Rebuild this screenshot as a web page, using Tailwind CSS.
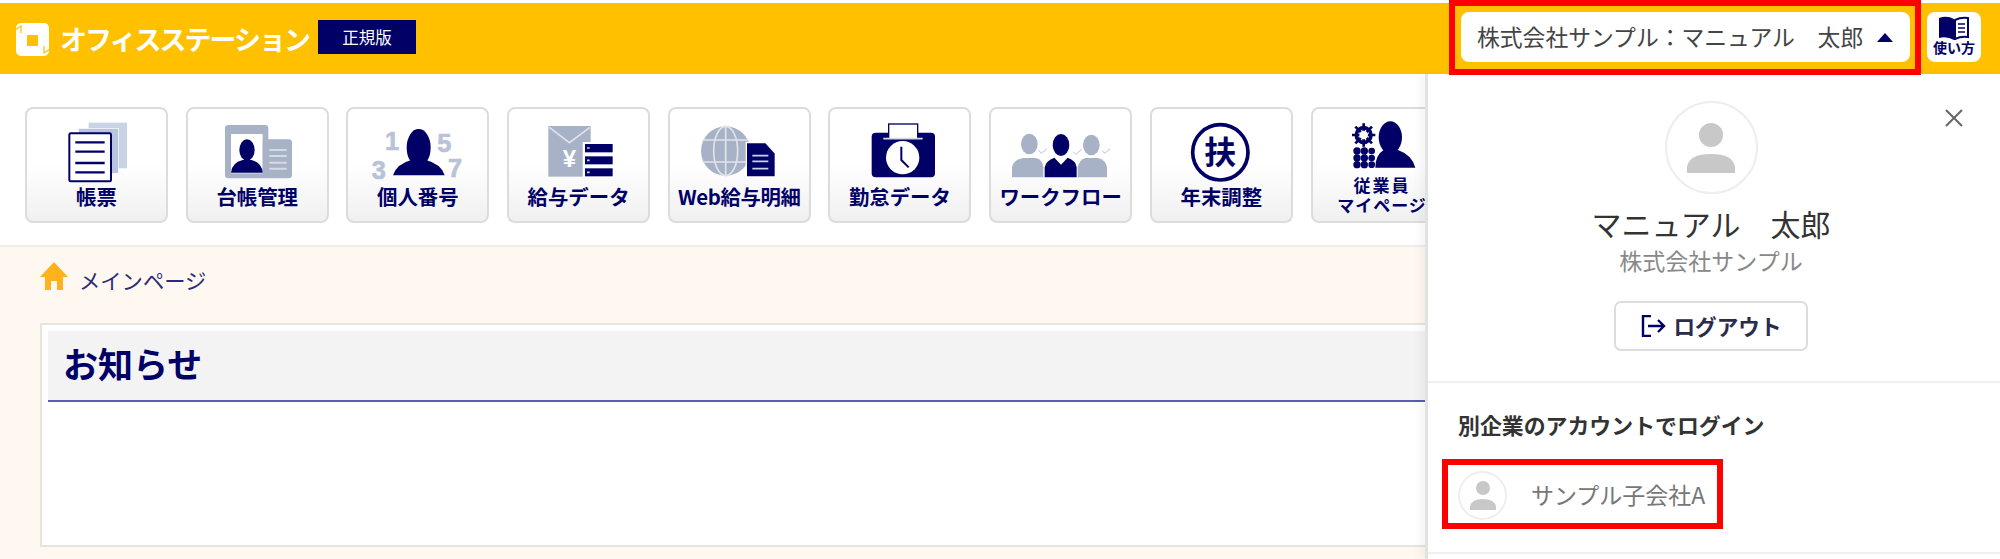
<!DOCTYPE html>
<html lang="ja">
<head>
<meta charset="utf-8">
<title>オフィスステーション</title>
<script src="https://cdn.jsdelivr.net/npm/@tailwindcss/browser@4"></script>
</head>
<body class="font-['Noto_Sans_CJK_JP','Noto_Sans',sans-serif] bg-white">
<div class="relative w-[2000px] h-[559px] overflow-hidden bg-[#fff8f0]">
  <div class="h-[3px] bg-white"></div>
  <header class="h-[71px] bg-[#ffc000] flex items-center pl-[16px] pr-[19px]">
    <svg class="w-[33px] h-[33px] mb-[-1px]" viewBox="0 0 33 33"><rect width="33" height="33" rx="5" fill="#fff"/><rect x="11" y="12" width="11" height="11" fill="#ffc000"/><path stroke="#ffc000" stroke-width="1.2" fill="none" d="M-1 7 5 3V10M34 26 28 30V23"/></svg>
    <span class="ml-[11px] w-[248px] text-white text-[27px] leading-none font-bold tracking-[-2px] whitespace-nowrap">オフィスステーション</span>
    <span class="ml-[10px] w-[98px] h-[34px] bg-[#000066] text-white text-[16.5px] flex items-center justify-center mb-[3px]">正規版</span>
    <div class="ml-auto flex items-center gap-[17px] mb-[3px]">
      <button class="w-[449px] h-[50px] bg-white rounded-[8px] flex items-center pl-[16px] text-[#444] text-[22.8px] leading-none whitespace-nowrap">
        <span>株式会社サンプル：マニュアル　太郎</span>
        <svg class="ml-[14px] w-[16px] h-[9px]" viewBox="0 0 16 9"><path fill="#000066" d="M8 0 16 9H0Z"/></svg>
      </button>
      <button class="w-[54px] h-[50px] bg-white rounded-[8px] flex flex-col items-center pt-[4px]">
        <svg class="w-[30px] h-[24px]" viewBox="0 0 30 24"><path fill="#000066" d="M0 2Q8 -1 15 3V24Q8 20 0 22Z"/><path fill="#fff" stroke="#000066" stroke-width="2" d="M16 4Q22 1 29 2V21Q22 20 16 23Z"/><path stroke="#000066" stroke-width="1.5" d="M19 8H26M19 12H26M19 16H26"/></svg>
        <span class="text-[14px] leading-[15px] font-bold text-[#000066]">使い方</span>
      </button>
    </div>
  </header>

  <nav class="h-[173px] bg-white border-b-2 border-[#ececec] pt-[33px] pl-[25px] flex gap-[17.7px] items-start">
    <a class="shrink-0 w-[143px] h-[116px] rounded-[8px] border-2 border-[#dcdcdc] bg-linear-to-b from-white from-50% to-[#f0f0f0] flex flex-col items-center pt-[11px] text-[#000066] text-[20.4px] leading-[21px] font-bold whitespace-nowrap">
      <svg class="w-[100px] h-[66px] shrink-0" viewBox="140 360 300 198"><rect x="265" y="368" width="115" height="137" fill="#c9d3e6"/><rect x="235" y="385" width="120" height="135" fill="#b9c5dc" stroke="#fff" stroke-width="2"/><rect x="207" y="400" width="125" height="144" rx="4" fill="#fff" stroke="#000066" stroke-width="6"/><path stroke="#000066" stroke-width="7" d="M225 427H313M225 455H313M225 489H313M225 517H313"/></svg>
      <span>帳票</span>
    </a>
    <a class="shrink-0 w-[143px] h-[116px] rounded-[8px] border-2 border-[#dcdcdc] bg-linear-to-b from-white from-50% to-[#f0f0f0] flex flex-col items-center pt-[11px] text-[#000066] text-[20.4px] leading-[21px] font-bold whitespace-nowrap">
      <svg class="w-[100px] h-[66px] shrink-0" viewBox="623 360 300 198"><rect x="677" y="375" width="130" height="160" rx="10" fill="#a8b2c6"/><rect x="695" y="402" width="95" height="118" fill="#fff"/><rect x="790" y="418" width="88" height="117" rx="10" fill="#a8b2c6"/><path stroke="#d5dae4" stroke-width="6" d="M810 450H862M810 468H862M810 488H862M810 506H862"/><ellipse cx="743" cy="450" rx="23" ry="32" fill="#000066"/><path fill="#000066" d="M695 518Q697 488 730 480H756Q788 488 790 518Z"/></svg>
      <span>台帳管理</span>
    </a>
    <a class="shrink-0 w-[143px] h-[116px] rounded-[8px] border-2 border-[#dcdcdc] bg-linear-to-b from-white from-50% to-[#f0f0f0] flex flex-col items-center pt-[11px] text-[#000066] text-[20.4px] leading-[21px] font-bold whitespace-nowrap">
      <svg class="w-[100px] h-[66px] shrink-0" viewBox="1105 360 300 198"><g fill="#b8c3d8" stroke="#b8c3d8" stroke-width="2" font-size="76" font-weight="700" font-family="Liberation Sans, sans-serif"><text x="1156" y="451">1</text><text x="1313" y="455">5</text><text x="1116" y="536">3</text><text x="1345" y="530">7</text></g><ellipse cx="1257" cy="443" rx="36" ry="56" fill="#000066"/><path fill="#000066" d="M1180 526Q1190 492 1235 480H1279Q1325 492 1335 526Z"/></svg>
      <span>個人番号</span>
    </a>
    <a class="shrink-0 w-[143px] h-[116px] rounded-[8px] border-2 border-[#dcdcdc] bg-linear-to-b from-white from-50% to-[#f0f0f0] flex flex-col items-center pt-[11px] text-[#000066] text-[20.4px] leading-[21px] font-bold whitespace-nowrap">
      <svg class="w-[100px] h-[66px] shrink-0" viewBox="117 90 300 198"><rect x="175" y="108" width="127" height="152" fill="#a8b2c6"/><path fill="none" stroke="#dfe3ea" stroke-width="5" d="M178 112 238 158 300 112"/><text x="238" y="232" text-anchor="middle" fill="#fff" font-size="72" font-weight="700" font-family="Liberation Sans, sans-serif">¥</text><rect x="278" y="156" width="96" height="108" fill="#fff"/><rect x="285" y="162" width="83" height="25" fill="#000066"/><rect x="285" y="199" width="83" height="24" fill="#000066"/><rect x="285" y="235" width="83" height="24" fill="#000066"/><path stroke="#c9d3e6" stroke-width="5" d="M291 174H299M291 211H299M291 247H299"/></svg>
      <span>給与データ</span>
    </a>
    <a class="shrink-0 w-[143px] h-[116px] rounded-[8px] border-2 border-[#dcdcdc] bg-linear-to-b from-white from-50% to-[#f0f0f0] flex flex-col items-center pt-[11px] text-[#000066] text-[20.4px] leading-[21px] font-bold whitespace-nowrap tracking-[-0.4px]">
      <svg class="w-[100px] h-[66px] shrink-0" viewBox="600 90 300 198"><circle cx="710" cy="183" r="74" fill="#a8b2c6"/><g fill="none" stroke="#dfe3ea" stroke-width="5"><ellipse cx="710" cy="183" rx="36" ry="74"/><path d="M710 109V257M640 150H780M640 216H780"/></g><path fill="#000066" stroke="#fff" stroke-width="4" d="M772 158H830L859 190V261H772Z"/><path stroke="#c9d3e6" stroke-width="5" d="M790 197H838M790 214H838M790 236H838"/></svg>
      <span>Web給与明細</span>
    </a>
    <a class="shrink-0 w-[143px] h-[116px] rounded-[8px] border-2 border-[#dcdcdc] bg-linear-to-b from-white from-50% to-[#f0f0f0] flex flex-col items-center pt-[11px] text-[#000066] text-[20.4px] leading-[21px] whitespace-nowrap font-bold">
      <svg class="w-[100px] h-[66px] shrink-0" viewBox="1082 90 300 198"><rect x="1147" y="128" width="190" height="134" rx="12" fill="#000066"/><rect x="1198" y="102" width="87" height="44" fill="#fff" stroke="#000066" stroke-width="4"/><path stroke="#d5dae4" stroke-width="5" d="M1182 146H1300"/><circle cx="1240" cy="203" r="50" fill="#fff"/><path fill="none" stroke="#000066" stroke-width="6" d="M1236 170V210L1258 232"/></svg>
      <span>勤怠データ</span>
    </a>
    <a class="shrink-0 w-[143px] h-[116px] rounded-[8px] border-2 border-[#dcdcdc] bg-linear-to-b from-white from-50% to-[#f0f0f0] flex flex-col items-center pt-[11px] text-[#000066] text-[20.4px] leading-[21px] font-bold whitespace-nowrap">
      <svg class="w-[100px] h-[66px] shrink-0" viewBox="95 90 300 198"><g fill="#a8b2c6"><ellipse cx="150" cy="162" rx="25" ry="31"/><path d="M98 262V232Q102 210 130 204H170Q190 210 192 232V262Z"/><ellipse cx="336" cy="165" rx="25" ry="31"/><path d="M295 262V232Q300 210 318 204H355Q380 210 383 232V262Z"/></g><ellipse cx="245" cy="165" rx="25" ry="33" fill="#000066"/><path fill="#000066" d="M196 262V232Q200 212 225 203L245 224 265 203Q290 212 292 232V262Z"/><path fill="none" stroke="#b8c3d8" stroke-width="3" d="M178 181 186 190 203 176M282 185 290 193 307 178M368 181 376 190 392 176"/></svg>
      <span>ワークフロー</span>
    </a>
    <a class="shrink-0 w-[143px] h-[116px] rounded-[8px] border-2 border-[#dcdcdc] bg-linear-to-b from-white from-50% to-[#f0f0f0] flex flex-col items-center pt-[11px] text-[#000066] text-[20.4px] leading-[21px] font-bold whitespace-nowrap">
      <svg class="w-[100px] h-[66px] shrink-0" viewBox="577 90 300 198"><circle cx="725" cy="187" r="83" fill="#fff" stroke="#000066" stroke-width="11"/><text x="725" y="221" text-anchor="middle" fill="#000066" font-size="96" font-weight="700" font-family="Noto Sans CJK JP, sans-serif">扶</text></svg>
      <span>年末調整</span>
    </a>
    <a class="shrink-0 w-[143px] h-[116px] rounded-[8px] border-2 border-[#dcdcdc] bg-linear-to-b from-white from-50% to-[#f0f0f0] flex flex-col items-center pt-[11px] text-[#000066] text-[17px] leading-[20px] font-bold whitespace-nowrap">
      <svg class="w-[100px] h-[55px] shrink-0" viewBox="1060 90 300 165"><circle cx="1155" cy="135" r="22" fill="none" stroke="#000066" stroke-width="11"/><path stroke="#000066" stroke-width="8" d="M1155 100V170M1120 135H1190M1130 110 1180 160M1180 110 1130 160"/><circle cx="1155" cy="135" r="13" fill="#fff"/><g fill="#000066"><circle cx="1135" cy="183" r="11"/><circle cx="1135" cy="204" r="11"/><circle cx="1135" cy="224" r="11"/><circle cx="1157" cy="183" r="11"/><circle cx="1157" cy="204" r="11"/><circle cx="1157" cy="224" r="11"/><circle cx="1179" cy="183" r="10"/><circle cx="1179" cy="204" r="10"/><circle cx="1179" cy="224" r="10"/><ellipse cx="1235" cy="142" rx="35" ry="48"/><path d="M1190 233Q1190 195 1215 180H1258Q1300 195 1310 233Z"/></g></svg>
      <span class="tracking-[2px]">従業員</span>
      <span class="tracking-[1px]">マイページ</span>
    </a>
  </nav>

  <main class="pl-[40px] pr-[40px]">
    <div class="h-[76px] flex items-start pt-[15px]">
      <svg class="w-[28px] h-[28px]" viewBox="0 0 28 28"><path fill="#ffb21e" d="M14 0 28 15H23V28H17V19H11V28H5V15H0Z"/></svg>
      <span class="ml-[11px] mt-[3px] text-[21.3px] leading-[30px] text-[#2b2b7a]">メインページ</span>
    </div>
    <section class="h-[224px] bg-white border-2 border-[#e6e6e0] p-[6px]">
      <h2 class="h-[71px] bg-[#f3f3f3] border-b-2 border-[#5c5cb0] pl-[15px] pb-[5px] flex items-center text-[35px] font-bold text-[#000066]">お知らせ</h2>
    </section>
  </main>

  <aside class="absolute left-[1425px] right-0 top-[74px] bottom-0 bg-white border-l-[3px] border-[#e2e2e2] shadow-[-6px_0_8px_rgba(0,0,0,0.04)] flex flex-col">
    <button class="absolute right-[37px] top-[35px] w-[18px] h-[18px]">
      <svg viewBox="0 0 18 18" class="w-[18px] h-[18px]"><path stroke="#666" stroke-width="2" d="M1 1 17 17M17 1 1 17"/></svg>
    </button>
    <div class="h-[309px] flex flex-col items-center pt-[27px] pr-[6px] border-b-2 border-[#f0f0f0]">
      <div class="w-[93px] h-[93px] rounded-full border-2 border-[#eeeeee] flex items-center justify-center">
        <svg class="w-[48px] h-[50px]" viewBox="0 0 48 50"><circle cx="24" cy="12" r="12" fill="#c8c8c8"/><path fill="#c8c8c8" d="M0 50V44Q2 31 24 31 46 31 48 44V50Z"/></svg>
      </div>
      <div class="mt-[8px] text-[30px] leading-[42px] text-[#333] whitespace-nowrap">マニュアル　太郎</div>
      <div class="mt-[1px] text-[23px] leading-[30px] text-[#888] whitespace-nowrap">株式会社サンプル</div>
      <button class="mt-[26px] w-[194px] h-[50px] border-2 border-[#dddddd] rounded-[7px] flex items-center justify-center gap-[8px] text-[21.6px] font-bold text-[#2b2b4b]">
        <svg class="w-[25px] h-[22px]" viewBox="0 0 25 22"><g fill="none" stroke="#000066" stroke-width="2.4"><path d="M10 1H2V21H10"/><path d="M7 11H23M17 5 23 11 17 17"/></g></svg>
        <span>ログアウト</span>
      </button>
    </div>
    <div class="px-[30px] pt-[24px] text-[21.9px] leading-[36px] font-bold text-[#333] whitespace-nowrap">別企業のアカウントでログイン</div>
    <div class="mt-[28px] pl-[30px] flex items-center">
      <div class="w-[49px] h-[49px] rounded-full border-2 border-[#eeeeee] flex items-center justify-center">
        <svg class="w-[26px] h-[29px]" viewBox="0 0 26 29"><circle cx="13" cy="7" r="7" fill="#c8c8c8"/><path fill="#c8c8c8" d="M0 29V26Q1 18 13 18 25 18 26 26V29Z"/></svg>
      </div>
      <span class="ml-[24px] mb-[3px] text-[#777] text-[23px] leading-none whitespace-nowrap">サンプル子会社A</span>
    </div>
    <div class="mt-[32px] border-b-2 border-[#f0f0f0]"></div>
  </aside>

  <div class="absolute left-[1449px] top-0 w-[472px] h-[75px] border-[6px] border-[#ff0000]"></div>
  <div class="absolute left-[1442px] top-[459px] w-[281px] h-[70px] border-[6px] border-[#ff0000]"></div>
</div>
</body>
</html>
